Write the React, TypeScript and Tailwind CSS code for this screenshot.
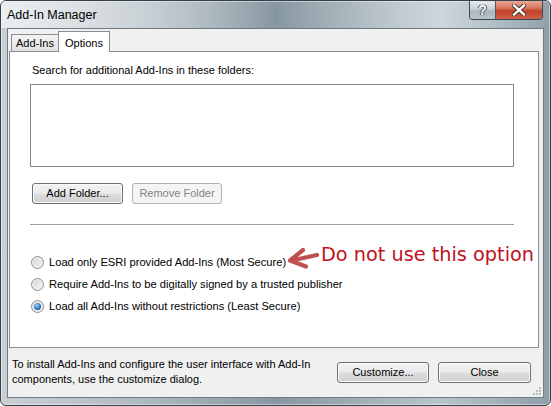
import React from "react";

function Radio({ checked }: { checked?: boolean }) {
  return (
    <span className="flex h-[13px] w-[13px] shrink-0 items-center justify-center rounded-full border border-[#8c8c8c] bg-[linear-gradient(135deg,#d2d2d2,#f8f8f8)] shadow-[inset_0_0_0_1px_#f2f2f2]">
      {checked && (
        <span className="h-[7px] w-[7px] rounded-full bg-[radial-gradient(circle_at_40%_35%,#a6d8fb,#2a78bd_55%,#0e3f72)]" />
      )}
    </span>
  );
}

function Btn({
  children,
  className,
  disabled,
}: {
  children: React.ReactNode;
  className: string;
  disabled?: boolean;
}) {
  return (
    <button
      className={
        "flex h-[21px] items-center justify-center rounded-[3px] border text-[11px] " +
        (disabled
          ? "border-[#adb2b5] bg-[#f4f4f4] text-[#838383] "
          : "border-[#707070] bg-[linear-gradient(#f2f2f2_0%,#ebebeb_48%,#dddddd_52%,#cfcfcf_100%)] text-black shadow-[inset_0_0_0_1px_#fbfbfb] ") +
        className
      }
    >
      {children}
    </button>
  );
}

const options = [
  "Load only ESRI provided Add-Ins (Most Secure)",
  "Require Add-Ins to be digitally signed by a trusted publisher",
  "Load all Add-Ins without restrictions (Least Secure)",
];

export default function App() {
  return (
    <div className="h-[406px] w-[551px] bg-white font-['Liberation_Sans',Arial,sans-serif] text-black">
      <div className="flex h-full w-full flex-col rounded-[6px] border border-[#37414a] bg-[linear-gradient(90deg,#c9d0d4_0%,#b0bac1_25%,#8797a1_50%,#b9c4ca_80%,#8e9fa9_100%)] shadow-[inset_0_0_0_1px_rgba(255,255,255,0.45)]">
        {/* title bar */}
        <div className="flex h-[27px] shrink-0 items-start justify-between rounded-t-[5px] bg-[linear-gradient(90deg,rgba(240,243,245,0.85)_0%,rgba(225,230,233,0.55)_25%,rgba(255,255,255,0)_50%,rgba(235,240,243,0.4)_80%,rgba(255,255,255,0)_100%)]">
          <div className="pl-[6px] pt-[7px] text-[12.5px] leading-[15px] text-black">
            Add-In Manager
          </div>
          <div className="mr-[7px] flex h-[19px] overflow-hidden rounded-b-[4px] border border-t-0 border-[#3e4852]">
            <div className="flex w-[26px] items-center justify-center border-r border-[#4e5862] bg-[linear-gradient(#e6ebee_0%,#c9d2d8_45%,#a9b6be_55%,#b8c4cb_100%)] text-[14px] font-bold leading-none text-white [text-shadow:0_0_1px_#2c3640,0_0_1px_#2c3640,1px_0_0_#4a545e,-1px_0_0_#4a545e]">
              ?
            </div>
            <div className="flex w-[46px] items-center justify-center bg-[linear-gradient(#e8a796_0%,#d7745e_40%,#c2412a_55%,#d0614a_100%)]">
              <svg width="14" height="12" viewBox="0 0 14 12">
                <path
                  d="M2 1.5 L12 10.5 M12 1.5 L2 10.5"
                  stroke="#3a2420"
                  strokeWidth="4.2"
                  strokeLinecap="square"
                />
                <path
                  d="M2 1.5 L12 10.5 M12 1.5 L2 10.5"
                  stroke="#ffffff"
                  strokeWidth="2.4"
                  strokeLinecap="square"
                />
              </svg>
            </div>
          </div>
        </div>

        {/* client area */}
        <div className="relative mb-[7px] ml-[6px] mr-[6px] flex flex-1 flex-col border border-[#6d7d88] bg-[#f0f0f0]">
          {/* tabs */}
          <div className="flex h-[22px] items-end pl-[3px]">
            <div className="mb-[-1px] flex h-[18px] w-[47px] items-center justify-center border border-r-0 border-[#898c95] bg-[linear-gradient(#f3f3f3,#e3e3e3)] text-[11px]">
              Add-Ins
            </div>
            <div className="relative z-10 mb-[-1px] flex h-[21px] w-[52px] items-start justify-center border border-b-0 border-[#898c95] bg-white pt-[3px] text-[11px]">
              Options
            </div>
          </div>

          {/* tab panel */}
          <div className="ml-[1px] mr-[4px] flex h-[297px] flex-col border border-[#898c95] bg-white">
            <div className="pl-[22px] pt-[12px] text-[11px] leading-[13px]">
              Search for additional Add-Ins in these folders:
            </div>
            <div className="ml-[20px] mt-[7px] h-[83px] w-[484px] border border-[#828790] bg-white" />
            <div className="ml-[22px] mt-[16px] flex items-start gap-[9px]">
              <Btn className="w-[91px]">Add Folder...</Btn>
              <Btn className="w-[90px]" disabled>
                Remove Folder
              </Btn>
            </div>
            <div className="ml-[20px] mt-[20px] h-px w-[484px] bg-[#a0a0a0]" />
            <div className="ml-[21px] mt-[26px] flex flex-col">
              {options.map((o, i) => (
                <div key={o} className="relative flex h-[22px] items-center gap-[5px] text-[11.15px]">
                  <Radio checked={i === 2} />
                  <span>{o}</span>
                  {i === 0 && (
                    <span className="absolute left-[255px] top-[-5px] flex items-start">
                      <svg width="34" height="24" viewBox="0 0 34 24">
                        <path
                          d="M31 9 L6 14.5 M17 4 L4 14.5 L20 20.5"
                          fill="none"
                          stroke="#c0504d"
                          strokeWidth="4.2"
                          strokeLinecap="round"
                          strokeLinejoin="round"
                        />
                      </svg>
                      <span className="ml-[1px] mt-[-1px] whitespace-nowrap font-['DejaVu_Sans',Verdana,sans-serif] text-[19.3px] leading-[19px] text-[#c0121c]">
                        Do not use this option
                      </span>
                    </span>
                  )}
                </div>
              ))}
            </div>
          </div>

          {/* footer */}
          <div className="flex flex-1 items-start justify-between pl-[4px] pr-[12px]">
            <div className="pt-[9px] text-[11px] leading-[15px]">
              To install Add-Ins and configure the user interface with Add-In
              <br />
              components, use the customize dialog.
            </div>
            <div className="mt-[14px] flex gap-[9px]">
              <Btn className="w-[92px]">Customize...</Btn>
              <Btn className="w-[93px]">Close</Btn>
            </div>
          </div>

          <svg
            className="absolute bottom-[1px] right-[1px]"
            width="10"
            height="10"
            viewBox="0 0 10 10"
          >
            {[
              [8, 2],
              [8, 5],
              [5, 5],
              [8, 8],
              [5, 8],
              [2, 8],
            ].map(([x, y]) => (
              <rect key={`${x}-${y}`} x={x - 1} y={y - 1} width="2" height="2" fill="#b8bcc0" />
            ))}
          </svg>
        </div>
      </div>
    </div>
  );
}
